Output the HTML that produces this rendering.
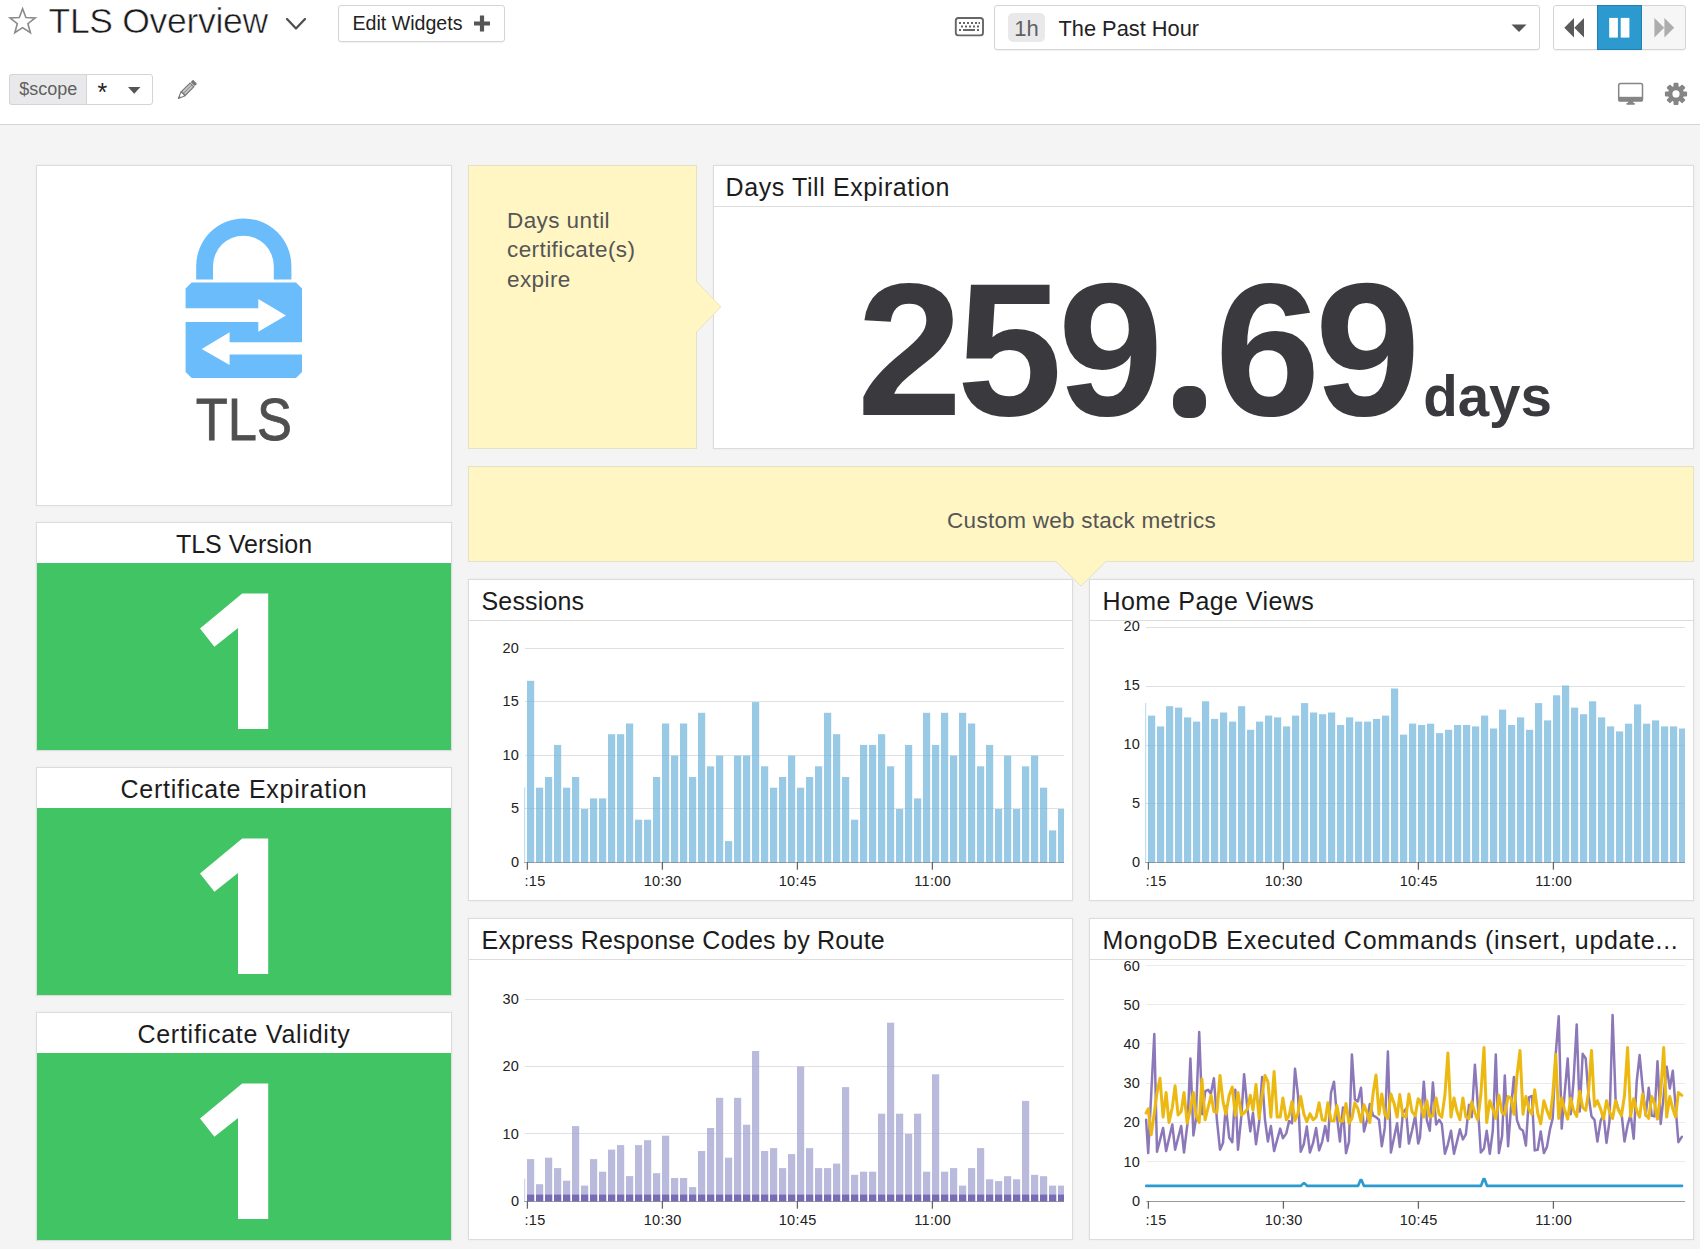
<!DOCTYPE html><html><head><meta charset="utf-8"><title>TLS Overview</title><style>
*{box-sizing:border-box;margin:0;padding:0}
html,body{width:1700px;height:1249px;overflow:hidden;background:#f4f4f4;font-family:"Liberation Sans",sans-serif;color:#222}
.abs{position:absolute}
#hdr{position:absolute;left:0;top:0;width:1700px;height:125px;background:#fff;border-bottom:1px solid #d6d6d6}
.w{position:absolute;background:#fff;border:1px solid #dcdcdc;box-shadow:0 0 2px rgba(0,0,0,.06)}
.wt{position:absolute;left:0;top:0;right:0;height:41px;border-bottom:1px solid #dcdcdc;font-size:25px;line-height:42.6px;padding-left:12.5px;color:#1c1c1c;white-space:nowrap;overflow:hidden}
.wtc{text-align:center;padding-left:0}
.green{position:absolute;left:0;right:0;top:40px;bottom:0;background:#41c464}
.note{position:absolute;background:#fff6c4;border:1px solid #e5e0c8}
.big1{position:absolute;left:0;right:0;text-align:center;color:#fff;font-weight:bold}
svg{position:absolute;left:0;top:0;overflow:visible}
.bn{font-size:190px;line-height:190px;font-weight:bold;color:#3a393e}
.ax{font-size:14.5px;letter-spacing:0.35px;fill:#222;font-family:"Liberation Sans",sans-serif}
</style></head><body>
<div id="hdr">
  <svg width="1700" height="125" viewBox="0 0 1700 125">
    <!-- star -->
    <path d="M22.6 8.8 L25.9 17.5 L35.2 17.9 L27.9 23.7 L30.4 32.7 L22.6 27.6 L14.8 32.7 L17.3 23.7 L10.0 17.9 L19.3 17.5 Z" fill="none" stroke="#8a8a8a" stroke-width="1.6" stroke-linejoin="miter"/>
    <!-- chevron -->
    <path d="M287 19 L296 28.5 L305 19" fill="none" stroke="#505050" stroke-width="2.3" stroke-linecap="round" stroke-linejoin="round"/>
  </svg>
  <div class="abs" style="left:48.5px;top:3.9px;font-size:35.5px;line-height:35.5px;color:#1a1a1a;letter-spacing:-0.3px;white-space:nowrap;-webkit-text-stroke:0.55px #fff" id="title">TLS Overview</div>
  <div class="abs" style="left:338px;top:5px;width:167px;height:37px;border:1px solid #d4d4d4;border-radius:3px;background:#fff;box-shadow:0 1px 1px rgba(0,0,0,.05)"></div>
  <div class="abs" style="left:352.5px;top:4.5px;font-size:19.6px;line-height:37px;color:#222;white-space:nowrap" id="editw">Edit Widgets</div>
  <svg width="1700" height="125" viewBox="0 0 1700 125">
    <path d="M482 15.5 V31.5 M474 23.5 H490" stroke="#555" stroke-width="4.2" fill="none"/>
  </svg>

  <!-- scope -->
  <div class="abs" style="left:9px;top:74px;width:144px;height:31px;border:1px solid #d4d4d4;border-radius:3px;background:#fff"></div>
  <div class="abs" style="left:9px;top:74px;width:78px;height:31px;background:#e9e9eb;border:1px solid #d4d4d4;border-radius:3px 0 0 3px"></div>
  <div class="abs" style="left:19.3px;top:74.4px;font-size:18px;line-height:31px;color:#606060" id="scope">$scope</div>
  <div class="abs" style="left:97.5px;top:76.5px;font-size:25px;line-height:31px;color:#222">*</div>
  <svg width="1700" height="125" viewBox="0 0 1700 125">
    <path d="M128 87 H140.4 L134.2 93.8 Z" fill="#555"/>
    <!-- pencil -->
    <g transform="translate(186.6,90.2) rotate(45)">
      <rect x="-2.9" y="-12" width="5.8" height="3.4" rx="0.9" fill="#777"/>
      <rect x="-2.7" y="-7.6" width="5.4" height="12.2" fill="#c4c4c4" stroke="#777" stroke-width="1.1"/>
      <path d="M0 -7.6 V4.6" stroke="#8a8a8a" stroke-width="0.9"/>
      <path d="M-2.9 5 H2.9 L0 11.6 Z" fill="#fff" stroke="#777" stroke-width="1.1" stroke-linejoin="round"/>
      <path d="M-1.2 9 H1.2 L0 11.8 Z" fill="#777"/>
    </g>
  </svg>

  <!-- keyboard icon -->
  <svg width="1700" height="125" viewBox="0 0 1700 125">
    <rect x="955.8" y="18" width="27.2" height="17.4" rx="2.6" fill="#fff" stroke="#666" stroke-width="1.9"/>
    <g fill="#666">
      <rect x="959" y="22" width="2" height="2"/><rect x="963" y="22" width="2" height="2"/><rect x="967" y="22" width="2" height="2"/><rect x="971" y="22" width="2" height="2"/><rect x="975" y="22" width="2" height="2"/><rect x="978.5" y="22" width="1.5" height="2"/>
      <rect x="961" y="25.5" width="2" height="2"/><rect x="965" y="25.5" width="2" height="2"/><rect x="969" y="25.5" width="2" height="2"/><rect x="973" y="25.5" width="2" height="2"/><rect x="977" y="25.5" width="2" height="2"/>
      <rect x="959" y="29" width="2" height="2"/><rect x="963" y="29" width="12" height="2"/><rect x="977" y="29" width="2" height="2"/>
    </g>
  </svg>

  <!-- time selector -->
  <div class="abs" style="left:994px;top:5px;width:546px;height:45px;border:1px solid #d4d4d4;border-radius:3px;background:#fff;box-shadow:0 1px 1px rgba(0,0,0,.05)"></div>
  <div class="abs" style="left:1008px;top:13px;width:37px;height:29px;background:#e9e9eb;border-radius:5px"></div>
  <div class="abs" style="left:1008px;top:14px;width:37px;font-size:22px;line-height:29px;color:#606060;text-align:center">1h</div>
  <div class="abs" style="left:1058.5px;top:6px;font-size:21.8px;line-height:45px;color:#222;white-space:nowrap" id="past">The Past Hour</div>
  <svg width="1700" height="125" viewBox="0 0 1700 125">
    <path d="M1511.5 24.5 H1526.5 L1519 32 Z" fill="#555"/>
  </svg>

  <!-- playback -->
  <div class="abs" style="left:1553px;top:5px;width:133px;height:45px;border:1px solid #d4d4d4;border-radius:3px;background:#f6f6f6;box-shadow:0 1px 1px rgba(0,0,0,.05)"></div>
  <div class="abs" style="left:1554px;top:6px;width:43px;height:43px;background:#fff;border-radius:2px 0 0 2px"></div>
  <div class="abs" style="left:1597px;top:5px;width:45px;height:45px;background:#2d9acf;border:1px solid #2180b0"></div>
  <svg width="1700" height="125" viewBox="0 0 1700 125">
    <path d="M1574 18 V37.5 L1564.3 27.7 Z M1584 18 V37.5 L1574.3 27.7 Z" fill="#5a5a5a"/>
    <rect x="1609.2" y="17.9" width="8.7" height="19.7" fill="#fff"/><rect x="1620.7" y="17.9" width="8.7" height="19.7" fill="#fff"/>
    <path d="M1654.4 18 V37.5 L1664.2 27.7 Z M1664.4 18 V37.5 L1674.2 27.7 Z" fill="#adadad"/>
    <!-- monitor -->
    <rect x="1618.7" y="83.5" width="23.8" height="17.6" rx="1.8" fill="#fff" stroke="#858585" stroke-width="1.5"/>
    <rect x="1618.7" y="96.8" width="23.8" height="4.3" fill="#858585"/>
    <path d="M1628.3 101 H1633 L1633.6 103.2 H1627.7 Z M1626.5 103 H1634.8 V104.7 H1626.5 Z" fill="#858585"/>
    <!-- gear -->
    <g transform="translate(1676,93.9)" fill="#858585">
      <g id="teeth">
        <rect x="-2.5" y="-11.1" width="5" height="22.2" rx="1"/>
        <rect x="-2.5" y="-11.1" width="5" height="22.2" rx="1" transform="rotate(45)"/>
        <rect x="-2.5" y="-11.1" width="5" height="22.2" rx="1" transform="rotate(90)"/>
        <rect x="-2.5" y="-11.1" width="5" height="22.2" rx="1" transform="rotate(135)"/>
      </g>
      <circle r="8"/>
      <circle r="3.6" fill="#fff"/>
    </g>
  </svg>
</div>
<div class="w" style="left:36px;top:165px;width:416px;height:341px"></div><svg width="1700" height="1249" viewBox="0 0 1700 1249" style="pointer-events:none">
    <g fill="#6bbcfb">
      <path d="M196.2 279.5 V266 A47.6 47.6 0 0 1 291.4 266 V279.5 H273.8 V266 A30.4 30.4 0 0 0 213 266 V279.5 Z"/>
      <path d="M191.6 282.4 H296 L302 288.4 V372 L296 378 H191.6 L185.6 372 V288.4 Z"/>
    </g>
    <g fill="#fff">
      <path d="M185 308.2 H258.3 V299 L286 315.5 L258.3 331.8 V322 H185 Z"/>
      <path d="M303 342.3 H229.6 V332.3 L201.7 349 L229.6 365 V354.6 H303 Z"/>
    </g>
    </svg><div class="abs" id="tlslogo" style="left:143px;width:200px;top:391.2px;text-align:center;font-size:59px;line-height:59px;color:#4f4f4f;-webkit-text-stroke:0.8px #4f4f4f;transform:translateX(0.8px) scaleX(0.888);transform-origin:50% 50%">TLS</div><div class="w" style="left:36px;top:522px;width:416px;height:229px"><div class="wt wtc" style="letter-spacing:0px">TLS Version</div><div class="green"><svg width="414" height="188" viewBox="0 0 414 188"><path d="M231.2 166 H201 V65 L177.4 83.8 L163 65.5 L205.2 30.6 H231.2 Z" fill="#fff"/></svg></div></div><div class="w" style="left:36px;top:767px;width:416px;height:229px"><div class="wt wtc" style="letter-spacing:0.74px">Certificate Expiration</div><div class="green"><svg width="414" height="188" viewBox="0 0 414 188"><path d="M231.2 166 H201 V65 L177.4 83.8 L163 65.5 L205.2 30.6 H231.2 Z" fill="#fff"/></svg></div></div><div class="w" style="left:36px;top:1012px;width:416px;height:229px"><div class="wt wtc" style="letter-spacing:0.75px">Certificate Validity</div><div class="green"><svg width="414" height="188" viewBox="0 0 414 188"><path d="M231.2 166 H201 V65 L177.4 83.8 L163 65.5 L205.2 30.6 H231.2 Z" fill="#fff"/></svg></div></div><div class="note" style="left:468px;top:165px;width:229px;height:284px"></div><div class="abs" id="note1" style="left:507px;top:205.6px;width:180px;font-size:22.5px;line-height:29.45px;letter-spacing:0.42px;color:#555">Days until<br>certificate(s)<br>expire</div><div class="note" style="left:468px;top:466px;width:1226px;height:96px"></div><svg width="1700" height="1249" viewBox="0 0 1700 1249" style="pointer-events:none"><path d="M1056 561 L1081 586 L1106 561 Z" fill="#fff6c4"/><path d="M1056 561.5 L1081 586 L1106 561.5" fill="none" stroke="#e6e0c0" stroke-width="1"/></svg><div class="abs" id="note2" style="left:469px;top:466px;width:1225px;height:96px;text-align:center;font-size:22.5px;line-height:110.6px;letter-spacing:0.26px;color:#555">Custom web stack metrics</div><div class="w" style="left:713px;top:165px;width:981px;height:284px"><div class="wt" style="letter-spacing:0.6px;padding-left:11.5px">Days Till Expiration</div></div><div class="abs bn" style="left:849.7px;top:254.3px;width:120px;text-align:center">2</div><div class="abs bn" style="left:949.5px;top:254.3px;width:120px;text-align:center">5</div><div class="abs bn" style="left:1050.5px;top:254.3px;width:120px;text-align:center">9</div><div class="abs bn" style="left:1207.5px;top:254.3px;width:120px;text-align:center">6</div><div class="abs bn" style="left:1307.7px;top:254.3px;width:120px;text-align:center">9</div><div class="abs" style="left:1172.8px;top:385.8px;width:33px;height:32.6px;border-radius:14px;background:#3a393e"></div><div class="abs" id="daysunit" style="left:1423.2px;top:368.6px;font-size:56.5px;line-height:56.5px;font-weight:bold;color:#3a393e;white-space:nowrap">days</div><svg width="1700" height="1249" viewBox="0 0 1700 1249" style="pointer-events:none"><path d="M695.5 281.3 L720.8 306.8 L695.5 332.4 Z" fill="#fff6c4"/><path d="M696.5 281.3 L720.8 306.8 L696.5 332.4" fill="none" stroke="#ebe4bd" stroke-width="1"/></svg><div class="w" style="left:468px;top:579px;width:605px;height:322px"><div class="wt" style="letter-spacing:0.15px">Sessions</div></div><div class="w" style="left:1089px;top:579px;width:605px;height:322px"><div class="wt" style="letter-spacing:0.43px">Home Page Views</div></div><div class="w" style="left:468px;top:918px;width:605px;height:322px"><div class="wt" style="letter-spacing:0.24px">Express Response Codes by Route</div></div><div class="w" style="left:1089px;top:918px;width:605px;height:322px"><div class="wt" style="letter-spacing:0.71px">MongoDB Executed Commands (insert, update...</div></div><svg width="1700" height="1249" viewBox="0 0 1700 1249" style="pointer-events:none"><defs><clipPath id="cl"><rect x="0" y="0" width="1064" height="1249"/></clipPath><clipPath id="cr"><rect x="1085" y="0" width="600" height="1249"/></clipPath></defs><text class="ax" x="519.3" y="866.6" text-anchor="end">0</text><path d="M525 808.5 H1064" stroke="#ebebeb" stroke-width="1"/><text class="ax" x="519.3" y="813.1" text-anchor="end">5</text><path d="M525 755.5 H1064" stroke="#ebebeb" stroke-width="1"/><text class="ax" x="519.3" y="759.7" text-anchor="end">10</text><path d="M525 701.5 H1064" stroke="#ebebeb" stroke-width="1"/><text class="ax" x="519.3" y="706.2" text-anchor="end">15</text><path d="M525 648.5 H1064" stroke="#ebebeb" stroke-width="1"/><text class="ax" x="519.3" y="652.8" text-anchor="end">20</text><rect x="524" y="787.2" width="1.2" height="74.8" fill="#98c9e5" opacity="0.6"/><g clip-path="url(#cl)"><rect x="527" y="680.8" width="7.2" height="181.7" fill="#98c9e5"/><rect x="536" y="787.7" width="7.2" height="74.8" fill="#98c9e5"/><rect x="545" y="777.0" width="7.2" height="85.5" fill="#98c9e5"/><rect x="554" y="744.9" width="7.2" height="117.6" fill="#98c9e5"/><rect x="563" y="787.7" width="7.2" height="74.8" fill="#98c9e5"/><rect x="572" y="777.0" width="7.2" height="85.5" fill="#98c9e5"/><rect x="581" y="809.0" width="7.2" height="53.4" fill="#98c9e5"/><rect x="590" y="798.4" width="7.2" height="64.1" fill="#98c9e5"/><rect x="599" y="798.4" width="7.2" height="64.1" fill="#98c9e5"/><rect x="608" y="734.2" width="7.2" height="128.3" fill="#98c9e5"/><rect x="617" y="734.2" width="7.2" height="128.3" fill="#98c9e5"/><rect x="626" y="723.5" width="7.2" height="139.0" fill="#98c9e5"/><rect x="635" y="819.7" width="7.2" height="42.8" fill="#98c9e5"/><rect x="644" y="819.7" width="7.2" height="42.8" fill="#98c9e5"/><rect x="653" y="777.0" width="7.2" height="85.5" fill="#98c9e5"/><rect x="662" y="723.5" width="7.2" height="139.0" fill="#98c9e5"/><rect x="671" y="755.6" width="7.2" height="106.9" fill="#98c9e5"/><rect x="680" y="723.5" width="7.2" height="139.0" fill="#98c9e5"/><rect x="689" y="777.0" width="7.2" height="85.5" fill="#98c9e5"/><rect x="698" y="712.8" width="7.2" height="149.7" fill="#98c9e5"/><rect x="707" y="766.3" width="7.2" height="96.2" fill="#98c9e5"/><rect x="716" y="755.6" width="7.2" height="106.9" fill="#98c9e5"/><rect x="725" y="841.1" width="7.2" height="21.4" fill="#98c9e5"/><rect x="734" y="755.6" width="7.2" height="106.9" fill="#98c9e5"/><rect x="743" y="755.6" width="7.2" height="106.9" fill="#98c9e5"/><rect x="752" y="702.1" width="7.2" height="160.3" fill="#98c9e5"/><rect x="761" y="766.3" width="7.2" height="96.2" fill="#98c9e5"/><rect x="770" y="787.7" width="7.2" height="74.8" fill="#98c9e5"/><rect x="779" y="777.0" width="7.2" height="85.5" fill="#98c9e5"/><rect x="788" y="755.6" width="7.2" height="106.9" fill="#98c9e5"/><rect x="797" y="787.7" width="7.2" height="74.8" fill="#98c9e5"/><rect x="806" y="777.0" width="7.2" height="85.5" fill="#98c9e5"/><rect x="815" y="766.3" width="7.2" height="96.2" fill="#98c9e5"/><rect x="824" y="712.8" width="7.2" height="149.7" fill="#98c9e5"/><rect x="833" y="734.2" width="7.2" height="128.3" fill="#98c9e5"/><rect x="842" y="777.0" width="7.2" height="85.5" fill="#98c9e5"/><rect x="851" y="819.7" width="7.2" height="42.8" fill="#98c9e5"/><rect x="860" y="744.9" width="7.2" height="117.6" fill="#98c9e5"/><rect x="869" y="744.9" width="7.2" height="117.6" fill="#98c9e5"/><rect x="878" y="734.2" width="7.2" height="128.3" fill="#98c9e5"/><rect x="887" y="766.3" width="7.2" height="96.2" fill="#98c9e5"/><rect x="896" y="809.0" width="7.2" height="53.4" fill="#98c9e5"/><rect x="905" y="744.9" width="7.2" height="117.6" fill="#98c9e5"/><rect x="914" y="798.4" width="7.2" height="64.1" fill="#98c9e5"/><rect x="923" y="712.8" width="7.2" height="149.7" fill="#98c9e5"/><rect x="932" y="744.9" width="7.2" height="117.6" fill="#98c9e5"/><rect x="941" y="712.8" width="7.2" height="149.7" fill="#98c9e5"/><rect x="950" y="755.6" width="7.2" height="106.9" fill="#98c9e5"/><rect x="959" y="712.8" width="7.2" height="149.7" fill="#98c9e5"/><rect x="968" y="723.5" width="7.2" height="139.0" fill="#98c9e5"/><rect x="977" y="766.3" width="7.2" height="96.2" fill="#98c9e5"/><rect x="986" y="744.9" width="7.2" height="117.6" fill="#98c9e5"/><rect x="995" y="809.0" width="7.2" height="53.4" fill="#98c9e5"/><rect x="1004" y="755.6" width="7.2" height="106.9" fill="#98c9e5"/><rect x="1013" y="809.0" width="7.2" height="53.4" fill="#98c9e5"/><rect x="1022" y="766.3" width="7.2" height="96.2" fill="#98c9e5"/><rect x="1031" y="755.6" width="7.2" height="106.9" fill="#98c9e5"/><rect x="1040" y="787.7" width="7.2" height="74.8" fill="#98c9e5"/><rect x="1049" y="830.4" width="7.2" height="32.1" fill="#98c9e5"/><rect x="1058" y="809.0" width="7.2" height="53.4" fill="#98c9e5"/></g><path d="M525 808.5 H1064" stroke="rgba(60,90,120,0.07)" stroke-width="1"/><path d="M525 755.5 H1064" stroke="rgba(60,90,120,0.07)" stroke-width="1"/><path d="M525 701.5 H1064" stroke="rgba(60,90,120,0.07)" stroke-width="1"/><path d="M525 648.5 H1064" stroke="rgba(60,90,120,0.07)" stroke-width="1"/><path d="M524 862.5 H1064" stroke="rgba(60,70,80,0.48)" stroke-width="1" fill="none"/><path d="M527.4 862.0 V869.7" stroke="#666" stroke-width="1.3"/><text class="ax" x="524.4" y="885.8" text-anchor="start">:15</text><path d="M662.4 862.0 V869.7" stroke="#666" stroke-width="1.3"/><text class="ax" x="662.6999999999999" y="885.8" text-anchor="middle">10:30</text><path d="M797.4 862.0 V869.7" stroke="#666" stroke-width="1.3"/><text class="ax" x="797.6999999999999" y="885.8" text-anchor="middle">10:45</text><path d="M932.4 862.0 V869.7" stroke="#666" stroke-width="1.3"/><text class="ax" x="932.6999999999999" y="885.8" text-anchor="middle">11:00</text></svg><svg width="1700" height="1249" viewBox="0 0 1700 1249" style="pointer-events:none"><defs><clipPath id="cl"><rect x="0" y="0" width="1064" height="1249"/></clipPath><clipPath id="cr"><rect x="1085" y="0" width="600" height="1249"/></clipPath></defs><text class="ax" x="1140.3" y="866.8" text-anchor="end">0</text><path d="M1146 803.5 H1685" stroke="#ebebeb" stroke-width="1"/><text class="ax" x="1140.3" y="807.9" text-anchor="end">5</text><path d="M1146 745.5 H1685" stroke="#ebebeb" stroke-width="1"/><text class="ax" x="1140.3" y="749.0" text-anchor="end">10</text><path d="M1146 686.5 H1685" stroke="#ebebeb" stroke-width="1"/><text class="ax" x="1140.3" y="690.1" text-anchor="end">15</text><path d="M1146 627.5 H1685" stroke="#ebebeb" stroke-width="1"/><text class="ax" x="1140.3" y="631.2" text-anchor="end">20</text><rect x="1145" y="703.0" width="1.2" height="159.0" fill="#98c9e5" opacity="0.6"/><g clip-path="url(#cr)"><rect x="1148" y="715.6" width="7.2" height="147.0" fill="#98c9e5"/><rect x="1157" y="726.4" width="7.2" height="136.2" fill="#98c9e5"/><rect x="1166" y="706.2" width="7.2" height="156.4" fill="#98c9e5"/><rect x="1175" y="707.6" width="7.2" height="155.0" fill="#98c9e5"/><rect x="1184" y="717.4" width="7.2" height="145.2" fill="#98c9e5"/><rect x="1193" y="721.6" width="7.2" height="141.0" fill="#98c9e5"/><rect x="1202" y="701.3" width="7.2" height="161.3" fill="#98c9e5"/><rect x="1211" y="718.9" width="7.2" height="143.7" fill="#98c9e5"/><rect x="1220" y="712.5" width="7.2" height="150.1" fill="#98c9e5"/><rect x="1229" y="721.6" width="7.2" height="141.0" fill="#98c9e5"/><rect x="1238" y="706.2" width="7.2" height="156.4" fill="#98c9e5"/><rect x="1247" y="729.8" width="7.2" height="132.8" fill="#98c9e5"/><rect x="1256" y="721.6" width="7.2" height="141.0" fill="#98c9e5"/><rect x="1265" y="715.6" width="7.2" height="147.0" fill="#98c9e5"/><rect x="1274" y="717.4" width="7.2" height="145.2" fill="#98c9e5"/><rect x="1283" y="726.4" width="7.2" height="136.2" fill="#98c9e5"/><rect x="1292" y="715.6" width="7.2" height="147.0" fill="#98c9e5"/><rect x="1301" y="703.1" width="7.2" height="159.5" fill="#98c9e5"/><rect x="1310" y="712.5" width="7.2" height="150.1" fill="#98c9e5"/><rect x="1319" y="714.2" width="7.2" height="148.4" fill="#98c9e5"/><rect x="1328" y="712.5" width="7.2" height="150.1" fill="#98c9e5"/><rect x="1337" y="725.0" width="7.2" height="137.6" fill="#98c9e5"/><rect x="1346" y="717.4" width="7.2" height="145.2" fill="#98c9e5"/><rect x="1355" y="721.6" width="7.2" height="141.0" fill="#98c9e5"/><rect x="1364" y="721.6" width="7.2" height="141.0" fill="#98c9e5"/><rect x="1373" y="718.9" width="7.2" height="143.7" fill="#98c9e5"/><rect x="1382" y="715.6" width="7.2" height="147.0" fill="#98c9e5"/><rect x="1391" y="688.5" width="7.2" height="174.1" fill="#98c9e5"/><rect x="1400" y="734.6" width="7.2" height="128.0" fill="#98c9e5"/><rect x="1409" y="723.6" width="7.2" height="139.0" fill="#98c9e5"/><rect x="1418" y="725.0" width="7.2" height="137.6" fill="#98c9e5"/><rect x="1427" y="723.7" width="7.2" height="138.9" fill="#98c9e5"/><rect x="1436" y="733.1" width="7.2" height="129.5" fill="#98c9e5"/><rect x="1445" y="729.8" width="7.2" height="132.8" fill="#98c9e5"/><rect x="1454" y="725.0" width="7.2" height="137.6" fill="#98c9e5"/><rect x="1463" y="725.0" width="7.2" height="137.6" fill="#98c9e5"/><rect x="1472" y="726.4" width="7.2" height="136.2" fill="#98c9e5"/><rect x="1481" y="715.6" width="7.2" height="147.0" fill="#98c9e5"/><rect x="1490" y="728.5" width="7.2" height="134.1" fill="#98c9e5"/><rect x="1499" y="709.6" width="7.2" height="153.0" fill="#98c9e5"/><rect x="1508" y="725.0" width="7.2" height="137.6" fill="#98c9e5"/><rect x="1517" y="717.4" width="7.2" height="145.2" fill="#98c9e5"/><rect x="1526" y="729.8" width="7.2" height="132.8" fill="#98c9e5"/><rect x="1535" y="703.1" width="7.2" height="159.5" fill="#98c9e5"/><rect x="1544" y="720.4" width="7.2" height="142.2" fill="#98c9e5"/><rect x="1553" y="695.3" width="7.2" height="167.3" fill="#98c9e5"/><rect x="1562" y="685.5" width="7.2" height="177.1" fill="#98c9e5"/><rect x="1571" y="707.6" width="7.2" height="155.0" fill="#98c9e5"/><rect x="1580" y="714.2" width="7.2" height="148.4" fill="#98c9e5"/><rect x="1589" y="701.3" width="7.2" height="161.3" fill="#98c9e5"/><rect x="1598" y="717.4" width="7.2" height="145.2" fill="#98c9e5"/><rect x="1607" y="726.4" width="7.2" height="136.2" fill="#98c9e5"/><rect x="1616" y="731.4" width="7.2" height="131.2" fill="#98c9e5"/><rect x="1625" y="723.7" width="7.2" height="138.9" fill="#98c9e5"/><rect x="1634" y="704.4" width="7.2" height="158.2" fill="#98c9e5"/><rect x="1643" y="723.7" width="7.2" height="138.9" fill="#98c9e5"/><rect x="1652" y="720.4" width="7.2" height="142.2" fill="#98c9e5"/><rect x="1661" y="726.4" width="7.2" height="136.2" fill="#98c9e5"/><rect x="1670" y="726.4" width="7.2" height="136.2" fill="#98c9e5"/><rect x="1679" y="728.5" width="7.2" height="134.1" fill="#98c9e5"/></g><path d="M1146 803.5 H1685" stroke="rgba(60,90,120,0.07)" stroke-width="1"/><path d="M1146 745.5 H1685" stroke="rgba(60,90,120,0.07)" stroke-width="1"/><path d="M1146 686.5 H1685" stroke="rgba(60,90,120,0.07)" stroke-width="1"/><path d="M1146 627.5 H1685" stroke="rgba(60,90,120,0.07)" stroke-width="1"/><path d="M1145 862.5 H1685" stroke="rgba(60,70,80,0.48)" stroke-width="1" fill="none"/><path d="M1148.4 862.0 V869.7" stroke="#666" stroke-width="1.3"/><text class="ax" x="1145.4" y="885.8" text-anchor="start">:15</text><path d="M1283.4 862.0 V869.7" stroke="#666" stroke-width="1.3"/><text class="ax" x="1283.7" y="885.8" text-anchor="middle">10:30</text><path d="M1418.4 862.0 V869.7" stroke="#666" stroke-width="1.3"/><text class="ax" x="1418.7" y="885.8" text-anchor="middle">10:45</text><path d="M1553.4 862.0 V869.7" stroke="#666" stroke-width="1.3"/><text class="ax" x="1553.7" y="885.8" text-anchor="middle">11:00</text></svg><svg width="1700" height="1249" viewBox="0 0 1700 1249" style="pointer-events:none"><defs><clipPath id="cl"><rect x="0" y="0" width="1064" height="1249"/></clipPath><clipPath id="cr"><rect x="1085" y="0" width="600" height="1249"/></clipPath></defs><text class="ax" x="519.3" y="1206.0" text-anchor="end">0</text><path d="M525 1133.5 H1064" stroke="#ebebeb" stroke-width="1"/><text class="ax" x="519.3" y="1138.6" text-anchor="end">10</text><path d="M525 1066.5 H1064" stroke="#ebebeb" stroke-width="1"/><text class="ax" x="519.3" y="1071.2" text-anchor="end">20</text><path d="M525 999.5 H1064" stroke="#ebebeb" stroke-width="1"/><text class="ax" x="519.3" y="1003.8" text-anchor="end">30</text><rect x="524" y="1178.8" width="1.2" height="22.2" fill="#b9b9dc" opacity="0.6"/><g clip-path="url(#cl)"><rect x="527" y="1159.1" width="7.2" height="42.2" fill="#babadd"/><rect x="527" y="1194.6" width="7.2" height="6.7" fill="#776bb5"/><rect x="536" y="1184.2" width="7.2" height="17.1" fill="#babadd"/><rect x="536" y="1194.6" width="7.2" height="6.7" fill="#776bb5"/><rect x="545" y="1157.7" width="7.2" height="43.6" fill="#babadd"/><rect x="545" y="1194.6" width="7.2" height="6.7" fill="#776bb5"/><rect x="554" y="1168.1" width="7.2" height="33.2" fill="#babadd"/><rect x="554" y="1194.6" width="7.2" height="6.7" fill="#776bb5"/><rect x="563" y="1180.7" width="7.2" height="20.6" fill="#babadd"/><rect x="563" y="1194.6" width="7.2" height="6.7" fill="#776bb5"/><rect x="572" y="1126.1" width="7.2" height="75.2" fill="#babadd"/><rect x="572" y="1194.6" width="7.2" height="6.7" fill="#776bb5"/><rect x="581" y="1185.6" width="7.2" height="15.7" fill="#babadd"/><rect x="581" y="1194.6" width="7.2" height="6.7" fill="#776bb5"/><rect x="590" y="1159.1" width="7.2" height="42.2" fill="#babadd"/><rect x="590" y="1194.6" width="7.2" height="6.7" fill="#776bb5"/><rect x="599" y="1171.7" width="7.2" height="29.6" fill="#babadd"/><rect x="599" y="1194.6" width="7.2" height="6.7" fill="#776bb5"/><rect x="608" y="1149.6" width="7.2" height="51.7" fill="#babadd"/><rect x="608" y="1194.6" width="7.2" height="6.7" fill="#776bb5"/><rect x="617" y="1145.1" width="7.2" height="56.2" fill="#babadd"/><rect x="617" y="1194.6" width="7.2" height="6.7" fill="#776bb5"/><rect x="626" y="1176.1" width="7.2" height="25.2" fill="#babadd"/><rect x="626" y="1194.6" width="7.2" height="6.7" fill="#776bb5"/><rect x="635" y="1145.1" width="7.2" height="56.2" fill="#babadd"/><rect x="635" y="1194.6" width="7.2" height="6.7" fill="#776bb5"/><rect x="644" y="1140.2" width="7.2" height="61.1" fill="#babadd"/><rect x="644" y="1194.6" width="7.2" height="6.7" fill="#776bb5"/><rect x="653" y="1173.2" width="7.2" height="28.1" fill="#babadd"/><rect x="653" y="1194.6" width="7.2" height="6.7" fill="#776bb5"/><rect x="662" y="1135.7" width="7.2" height="65.6" fill="#babadd"/><rect x="662" y="1194.6" width="7.2" height="6.7" fill="#776bb5"/><rect x="671" y="1178.0" width="7.2" height="23.3" fill="#babadd"/><rect x="671" y="1194.6" width="7.2" height="6.7" fill="#776bb5"/><rect x="680" y="1178.0" width="7.2" height="23.3" fill="#babadd"/><rect x="680" y="1194.6" width="7.2" height="6.7" fill="#776bb5"/><rect x="689" y="1187.1" width="7.2" height="14.2" fill="#babadd"/><rect x="689" y="1194.6" width="7.2" height="6.7" fill="#776bb5"/><rect x="698" y="1151.0" width="7.2" height="50.3" fill="#babadd"/><rect x="698" y="1194.6" width="7.2" height="6.7" fill="#776bb5"/><rect x="707" y="1128.0" width="7.2" height="73.3" fill="#babadd"/><rect x="707" y="1194.6" width="7.2" height="6.7" fill="#776bb5"/><rect x="716" y="1097.8" width="7.2" height="103.5" fill="#babadd"/><rect x="716" y="1194.6" width="7.2" height="6.7" fill="#776bb5"/><rect x="725" y="1157.7" width="7.2" height="43.6" fill="#babadd"/><rect x="725" y="1194.6" width="7.2" height="6.7" fill="#776bb5"/><rect x="734" y="1097.8" width="7.2" height="103.5" fill="#babadd"/><rect x="734" y="1194.6" width="7.2" height="6.7" fill="#776bb5"/><rect x="743" y="1124.7" width="7.2" height="76.6" fill="#babadd"/><rect x="743" y="1194.6" width="7.2" height="6.7" fill="#776bb5"/><rect x="752" y="1051.0" width="7.2" height="150.3" fill="#babadd"/><rect x="752" y="1194.6" width="7.2" height="6.7" fill="#776bb5"/><rect x="761" y="1151.0" width="7.2" height="50.3" fill="#babadd"/><rect x="761" y="1194.6" width="7.2" height="6.7" fill="#776bb5"/><rect x="770" y="1148.1" width="7.2" height="53.2" fill="#babadd"/><rect x="770" y="1194.6" width="7.2" height="6.7" fill="#776bb5"/><rect x="779" y="1168.1" width="7.2" height="33.2" fill="#babadd"/><rect x="779" y="1194.6" width="7.2" height="6.7" fill="#776bb5"/><rect x="788" y="1154.1" width="7.2" height="47.2" fill="#babadd"/><rect x="788" y="1194.6" width="7.2" height="6.7" fill="#776bb5"/><rect x="797" y="1066.5" width="7.2" height="134.8" fill="#babadd"/><rect x="797" y="1194.6" width="7.2" height="6.7" fill="#776bb5"/><rect x="806" y="1148.1" width="7.2" height="53.2" fill="#babadd"/><rect x="806" y="1194.6" width="7.2" height="6.7" fill="#776bb5"/><rect x="815" y="1168.1" width="7.2" height="33.2" fill="#babadd"/><rect x="815" y="1194.6" width="7.2" height="6.7" fill="#776bb5"/><rect x="824" y="1168.1" width="7.2" height="33.2" fill="#babadd"/><rect x="824" y="1194.6" width="7.2" height="6.7" fill="#776bb5"/><rect x="833" y="1163.6" width="7.2" height="37.7" fill="#babadd"/><rect x="833" y="1194.6" width="7.2" height="6.7" fill="#776bb5"/><rect x="842" y="1087.1" width="7.2" height="114.2" fill="#babadd"/><rect x="842" y="1194.6" width="7.2" height="6.7" fill="#776bb5"/><rect x="851" y="1174.8" width="7.2" height="26.5" fill="#babadd"/><rect x="851" y="1194.6" width="7.2" height="6.7" fill="#776bb5"/><rect x="860" y="1171.7" width="7.2" height="29.6" fill="#babadd"/><rect x="860" y="1194.6" width="7.2" height="6.7" fill="#776bb5"/><rect x="869" y="1171.7" width="7.2" height="29.6" fill="#babadd"/><rect x="869" y="1194.6" width="7.2" height="6.7" fill="#776bb5"/><rect x="878" y="1113.7" width="7.2" height="87.6" fill="#babadd"/><rect x="878" y="1194.6" width="7.2" height="6.7" fill="#776bb5"/><rect x="887" y="1022.7" width="7.2" height="178.6" fill="#babadd"/><rect x="887" y="1194.6" width="7.2" height="6.7" fill="#776bb5"/><rect x="896" y="1113.7" width="7.2" height="87.6" fill="#babadd"/><rect x="896" y="1194.6" width="7.2" height="6.7" fill="#776bb5"/><rect x="905" y="1133.9" width="7.2" height="67.4" fill="#babadd"/><rect x="905" y="1194.6" width="7.2" height="6.7" fill="#776bb5"/><rect x="914" y="1113.7" width="7.2" height="87.6" fill="#babadd"/><rect x="914" y="1194.6" width="7.2" height="6.7" fill="#776bb5"/><rect x="923" y="1171.7" width="7.2" height="29.6" fill="#babadd"/><rect x="923" y="1194.6" width="7.2" height="6.7" fill="#776bb5"/><rect x="932" y="1074.3" width="7.2" height="127.0" fill="#babadd"/><rect x="932" y="1194.6" width="7.2" height="6.7" fill="#776bb5"/><rect x="941" y="1171.7" width="7.2" height="29.6" fill="#babadd"/><rect x="941" y="1194.6" width="7.2" height="6.7" fill="#776bb5"/><rect x="950" y="1168.1" width="7.2" height="33.2" fill="#babadd"/><rect x="950" y="1194.6" width="7.2" height="6.7" fill="#776bb5"/><rect x="959" y="1185.6" width="7.2" height="15.7" fill="#babadd"/><rect x="959" y="1194.6" width="7.2" height="6.7" fill="#776bb5"/><rect x="968" y="1168.1" width="7.2" height="33.2" fill="#babadd"/><rect x="968" y="1194.6" width="7.2" height="6.7" fill="#776bb5"/><rect x="977" y="1148.1" width="7.2" height="53.2" fill="#babadd"/><rect x="977" y="1194.6" width="7.2" height="6.7" fill="#776bb5"/><rect x="986" y="1179.3" width="7.2" height="22.0" fill="#babadd"/><rect x="986" y="1194.6" width="7.2" height="6.7" fill="#776bb5"/><rect x="995" y="1181.1" width="7.2" height="20.2" fill="#babadd"/><rect x="995" y="1194.6" width="7.2" height="6.7" fill="#776bb5"/><rect x="1004" y="1176.2" width="7.2" height="25.1" fill="#babadd"/><rect x="1004" y="1194.6" width="7.2" height="6.7" fill="#776bb5"/><rect x="1013" y="1179.3" width="7.2" height="22.0" fill="#babadd"/><rect x="1013" y="1194.6" width="7.2" height="6.7" fill="#776bb5"/><rect x="1022" y="1100.9" width="7.2" height="100.4" fill="#babadd"/><rect x="1022" y="1194.6" width="7.2" height="6.7" fill="#776bb5"/><rect x="1031" y="1174.8" width="7.2" height="26.5" fill="#babadd"/><rect x="1031" y="1194.6" width="7.2" height="6.7" fill="#776bb5"/><rect x="1040" y="1176.2" width="7.2" height="25.1" fill="#babadd"/><rect x="1040" y="1194.6" width="7.2" height="6.7" fill="#776bb5"/><rect x="1049" y="1185.6" width="7.2" height="15.7" fill="#babadd"/><rect x="1049" y="1194.6" width="7.2" height="6.7" fill="#776bb5"/><rect x="1058" y="1185.6" width="7.2" height="15.7" fill="#babadd"/><rect x="1058" y="1194.6" width="7.2" height="6.7" fill="#776bb5"/></g><path d="M525 1133.5 H1064" stroke="rgba(90,80,140,0.07)" stroke-width="1"/><path d="M525 1066.5 H1064" stroke="rgba(90,80,140,0.07)" stroke-width="1"/><path d="M525 999.5 H1064" stroke="rgba(90,80,140,0.07)" stroke-width="1"/><path d="M524 1201.5 H1064" stroke="rgba(60,70,80,0.48)" stroke-width="1" fill="none"/><path d="M527.4 1201.0 V1208.7" stroke="#666" stroke-width="1.3"/><text class="ax" x="524.4" y="1224.5" text-anchor="start">:15</text><path d="M662.4 1201.0 V1208.7" stroke="#666" stroke-width="1.3"/><text class="ax" x="662.6999999999999" y="1224.5" text-anchor="middle">10:30</text><path d="M797.4 1201.0 V1208.7" stroke="#666" stroke-width="1.3"/><text class="ax" x="797.6999999999999" y="1224.5" text-anchor="middle">10:45</text><path d="M932.4 1201.0 V1208.7" stroke="#666" stroke-width="1.3"/><text class="ax" x="932.6999999999999" y="1224.5" text-anchor="middle">11:00</text></svg><svg width="1700" height="1249" viewBox="0 0 1700 1249" style="pointer-events:none"><defs><clipPath id="cl"><rect x="0" y="0" width="1064" height="1249"/></clipPath><clipPath id="cr"><rect x="1085" y="0" width="600" height="1249"/></clipPath></defs><text class="ax" x="1140.3" y="1205.8" text-anchor="end">0</text><path d="M1146 1161.5 H1685" stroke="#ebebeb" stroke-width="1"/><text class="ax" x="1140.3" y="1166.6" text-anchor="end">10</text><path d="M1146 1122.5 H1685" stroke="#ebebeb" stroke-width="1"/><text class="ax" x="1140.3" y="1127.4" text-anchor="end">20</text><path d="M1146 1083.5 H1685" stroke="#ebebeb" stroke-width="1"/><text class="ax" x="1140.3" y="1088.1" text-anchor="end">30</text><path d="M1146 1043.5 H1685" stroke="#ebebeb" stroke-width="1"/><text class="ax" x="1140.3" y="1048.9" text-anchor="end">40</text><path d="M1146 1004.5 H1685" stroke="#ebebeb" stroke-width="1"/><text class="ax" x="1140.3" y="1009.7" text-anchor="end">50</text><path d="M1146 965.5 H1685" stroke="#ebebeb" stroke-width="1"/><text class="ax" x="1140.3" y="970.5" text-anchor="end">60</text><polyline points="1146.1,1119.8 1148.2,1153.1 1154.3,1034.0 1157.0,1151.8 1163.1,1127.9 1166.1,1151.1 1172.3,1124.5 1175.1,1149.7 1181.2,1125.9 1184.0,1152.5 1187.6,1122.5 1190.4,1058.5 1193.4,1135.4 1195.8,1119.8 1199.2,1032.0 1202.3,1114.3 1205.3,1091.2 1208.1,1089.8 1210.8,1093.9 1213.9,1078.3 1216.9,1119.8 1220.0,1149.7 1223.0,1142.9 1225.8,1106.2 1229.2,1137.5 1232.3,1142.2 1235.3,1089.8 1238.0,1149.7 1241.4,1115.7 1244.1,1074.2 1247.5,1108.9 1250.3,1131.4 1253.0,1113.0 1256.0,1144.3 1259.1,1122.5 1262.1,1076.9 1265.0,1119.8 1267.9,1141.6 1270.9,1125.9 1274.1,1151.1 1280.2,1128.6 1282.9,1138.2 1286.3,1133.4 1289.1,1121.1 1292.0,1123.2 1295.0,1068.7 1298.0,1095.3 1300.7,1151.8 1303.8,1144.3 1306.8,1126.6 1309.9,1152.5 1313.1,1142.9 1316.1,1127.9 1319.1,1150.4 1322.2,1141.6 1325.2,1125.9 1327.9,1140.9 1331.0,1092.6 1334.0,1081.7 1336.9,1115.7 1339.9,1141.6 1342.9,1107.5 1346.0,1153.1 1349.0,1141.6 1351.9,1054.4 1354.9,1099.4 1357.9,1101.4 1361.0,1087.8 1364.0,1131.4 1367.1,1119.8 1369.8,1104.1 1373.2,1115.7 1376.0,1117.1 1379.0,1119.8 1381.8,1146.3 1384.8,1127.9 1387.9,1051.5 1390.9,1152.5 1394.1,1137.5 1397.1,1123.2 1399.8,1147.0 1402.9,1113.0 1405.9,1108.9 1408.9,1143.6 1412.0,1130.7 1415.2,1115.7 1418.2,1143.6 1420.0,1137.5 1423.8,1081.7 1426.8,1119.8 1429.8,1130.7 1432.9,1082.4 1436.1,1124.5 1439.1,1119.8 1441.8,1123.9 1444.9,1153.8 1447.9,1144.3 1451.0,1130.7 1454.0,1153.8 1457.0,1141.6 1459.9,1129.3 1462.9,1139.5 1465.9,1134.1 1469.0,1104.8 1471.7,1117.1 1474.9,1064.7 1477.8,1104.8 1480.8,1152.5 1484.0,1148.4 1486.7,1130.7 1489.8,1153.8 1492.8,1130.7 1495.8,1054.4 1498.9,1153.1 1502.1,1136.1 1504.8,1075.5 1508.1,1146.3 1510.9,1108.9 1513.9,1076.9 1516.9,1119.8 1520.0,1128.6 1523.0,1130.7 1525.9,1145.6 1528.9,1097.3 1531.9,1096.0 1534.7,1150.4 1537.7,1149.7 1540.7,1131.4 1543.9,1153.1 1546.9,1147.0 1550.0,1129.3 1552.7,1118.4 1555.7,1054.4 1558.7,1016.3 1561.7,1128.6 1564.7,1092.6 1567.7,1058.5 1570.7,1114.3 1573.5,1081.7 1576.7,1024.5 1579.7,1111.6 1582.7,1053.8 1585.7,1058.5 1588.5,1095.3 1591.5,1116.4 1594.5,1119.8 1597.4,1141.6 1600.6,1121.1 1603.5,1114.3 1606.5,1142.9 1609.5,1121.1 1612.6,1015.0 1615.6,1099.4 1618.5,1109.6 1621.5,1113.0 1624.5,1141.6 1627.6,1125.2 1630.6,1114.3 1633.7,1138.8 1636.7,1081.7 1639.6,1055.1 1642.6,1087.1 1645.7,1115.7 1648.7,1087.8 1651.7,1115.7 1654.5,1116.4 1657.5,1061.3 1660.7,1123.9 1663.7,1095.3 1666.7,1066.7 1669.8,1088.5 1672.8,1070.8 1675.5,1106.2 1678.4,1142.2 1681.8,1136.8" fill="none" stroke="#8c78b9" stroke-width="2.5" stroke-linejoin="round" stroke-linecap="round"/><polyline points="1146.1,1113.0 1148.2,1108.9 1151.2,1134.8 1154.3,1113.0 1157.0,1092.6 1160.0,1078.3 1163.1,1117.1 1166.1,1092.6 1169.0,1122.5 1172.3,1107.5 1175.1,1085.8 1178.1,1115.0 1181.2,1111.6 1184.0,1092.6 1187.2,1123.2 1190.4,1108.9 1193.4,1092.6 1196.2,1115.7 1199.2,1122.5 1201.9,1078.9 1205.1,1119.8 1208.1,1107.5 1211.1,1095.3 1213.9,1111.6 1216.9,1112.3 1220.0,1075.5 1223.0,1101.4 1225.8,1114.3 1229.2,1095.3 1232.3,1087.1 1235.3,1115.7 1238.0,1092.6 1241.4,1115.0 1244.1,1113.0 1247.5,1108.9 1250.3,1095.3 1253.0,1110.3 1256.0,1084.4 1259.1,1118.4 1262.1,1095.3 1265.0,1075.5 1267.9,1081.7 1270.9,1117.1 1274.1,1071.5 1277.2,1117.1 1280.2,1117.1 1282.9,1098.0 1286.3,1119.8 1289.1,1115.7 1292.0,1101.4 1295.0,1120.5 1298.0,1113.0 1300.7,1096.6 1303.8,1113.7 1306.8,1121.8 1309.9,1113.7 1313.1,1119.8 1316.1,1117.1 1319.1,1102.8 1322.2,1119.8 1325.2,1120.5 1327.9,1102.8 1331.0,1120.5 1334.0,1121.1 1336.9,1105.5 1339.9,1121.1 1342.9,1121.1 1346.0,1103.4 1349.0,1123.2 1351.9,1118.4 1354.9,1102.8 1357.9,1108.9 1361.0,1121.8 1364.0,1104.8 1367.1,1113.0 1369.8,1122.5 1373.2,1092.6 1376.0,1074.9 1379.0,1114.3 1381.8,1093.9 1384.8,1114.3 1387.9,1118.4 1390.9,1093.9 1394.1,1103.4 1397.1,1117.1 1399.8,1094.6 1402.9,1115.7 1405.9,1117.1 1408.9,1093.9 1412.0,1111.6 1415.2,1115.7 1418.2,1098.7 1420.0,1100.7 1423.8,1117.1 1426.8,1100.7 1429.8,1117.1 1432.9,1115.7 1436.1,1098.0 1439.1,1114.3 1441.8,1117.1 1444.9,1095.3 1447.9,1053.1 1451.0,1117.1 1454.0,1098.0 1457.0,1111.6 1459.9,1119.8 1462.9,1098.0 1465.9,1117.1 1469.0,1118.4 1471.7,1102.1 1474.9,1113.0 1477.8,1119.8 1480.8,1095.3 1484.0,1047.6 1486.7,1122.5 1489.8,1100.7 1492.8,1108.9 1495.8,1118.4 1498.9,1095.3 1502.1,1113.0 1504.8,1114.3 1508.1,1096.6 1510.9,1098.0 1513.9,1114.3 1516.9,1076.2 1520.0,1050.4 1523.0,1114.3 1525.9,1096.6 1528.9,1108.9 1531.9,1114.3 1534.7,1089.8 1537.7,1113.0 1540.7,1123.9 1543.9,1100.7 1546.9,1110.3 1550.0,1118.4 1552.7,1095.3 1555.7,1054.4 1558.7,1118.4 1561.7,1098.0 1564.7,1110.3 1567.7,1119.1 1570.7,1098.0 1573.5,1110.3 1576.7,1116.4 1579.7,1091.2 1582.7,1107.5 1585.7,1110.3 1588.5,1092.6 1591.5,1050.4 1594.5,1106.2 1597.4,1100.7 1600.6,1108.9 1603.5,1119.1 1606.5,1100.7 1609.5,1111.6 1612.6,1118.4 1615.6,1100.7 1618.5,1110.3 1621.5,1115.7 1624.5,1095.3 1627.6,1047.6 1630.6,1116.4 1633.7,1098.7 1636.7,1110.3 1639.6,1117.1 1642.6,1093.9 1645.7,1114.3 1648.7,1118.4 1651.7,1096.6 1654.5,1103.4 1657.5,1119.1 1660.7,1092.6 1663.7,1047.6 1666.7,1117.1 1669.8,1096.6 1672.8,1108.9 1675.5,1117.1 1678.4,1092.6 1681.8,1095.3" fill="none" stroke="#ecb912" stroke-width="3" stroke-linejoin="round" stroke-linecap="round"/><polyline points="1146.3,1185.9 1301,1185.9 1303.4,1183.4 1304.6,1183.4 1307,1185.9 1358,1185.9 1360.4,1180.2 1361.6,1180.2 1364,1185.9 1481,1185.9 1483.4,1179.2 1484.6,1179.2 1487,1185.9 1682,1185.9" fill="none" stroke="#2b9bcf" stroke-width="2.7" stroke-linejoin="round" stroke-linecap="round"/><path d="M1146.3 1201.5 H1685" stroke="#9a9a9a" stroke-width="1" fill="none"/><path d="M1148.4 1201.0 V1208.7" stroke="#666" stroke-width="1.3"/><text class="ax" x="1145.4" y="1224.5" text-anchor="start">:15</text><path d="M1283.4 1201.0 V1208.7" stroke="#666" stroke-width="1.3"/><text class="ax" x="1283.7" y="1224.5" text-anchor="middle">10:30</text><path d="M1418.4 1201.0 V1208.7" stroke="#666" stroke-width="1.3"/><text class="ax" x="1418.7" y="1224.5" text-anchor="middle">10:45</text><path d="M1553.4 1201.0 V1208.7" stroke="#666" stroke-width="1.3"/><text class="ax" x="1553.7" y="1224.5" text-anchor="middle">11:00</text></svg></body></html>
